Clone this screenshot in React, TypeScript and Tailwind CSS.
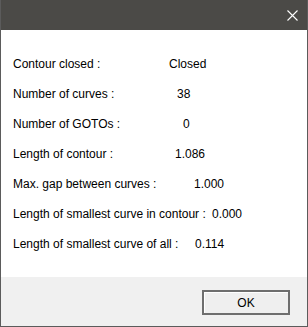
const rows: { label: string; value: string; w: string }[] = [
  { label: "Contour closed :", value: "Closed", w: "w-[156px]" },
  { label: "Number of curves :", value: "38", w: "w-[164px]" },
  { label: "Number of GOTOs :", value: "0", w: "w-[170px]" },
  { label: "Length of contour :", value: "1.086", w: "w-[162px]" },
  { label: "Max. gap between curves :", value: "1.000", w: "w-[181px]" },
  { label: "Length of smallest curve in contour :", value: "0.000", w: "w-[199px]" },
  { label: "Length of smallest curve of all :", value: "0.114", w: "w-[182px]" },
];

export default function App() {
  return (
    <div className="w-[308px] h-[327px] flex flex-col border-x border-b border-[#5b5b5b] bg-white font-['Liberation_Sans',Arial,sans-serif] text-[12px] text-black">
      <div className="h-[30px] shrink-0 bg-[#4b4a47] flex items-center justify-end pr-[9px]">
        <svg width="11" height="11" viewBox="0 0 11 11">
          <path d="M0.5 0.5 L10.5 10.5 M10.5 0.5 L0.5 10.5" stroke="#ffffff" strokeWidth="1.1" />
        </svg>
      </div>

      <div className="flex-1 pt-[19px] pl-[12px]">
        {rows.map((r) => (
          <div key={r.label} className="h-[30px] flex items-center whitespace-nowrap">
            <span className={r.w}>{r.label}</span>
            <span>{r.value}</span>
          </div>
        ))}
      </div>

      <div className="h-[49px] shrink-0 bg-[#f0f0f0] flex justify-end items-start pt-[13px] pr-[17px]">
        <button className="w-[88px] h-[25px] border-2 border-[#6e6e6e] bg-[#efefef] shadow-[inset_1px_1px_0_#ffffff] text-[12px] leading-none">
          OK
        </button>
      </div>
    </div>
  );
}
